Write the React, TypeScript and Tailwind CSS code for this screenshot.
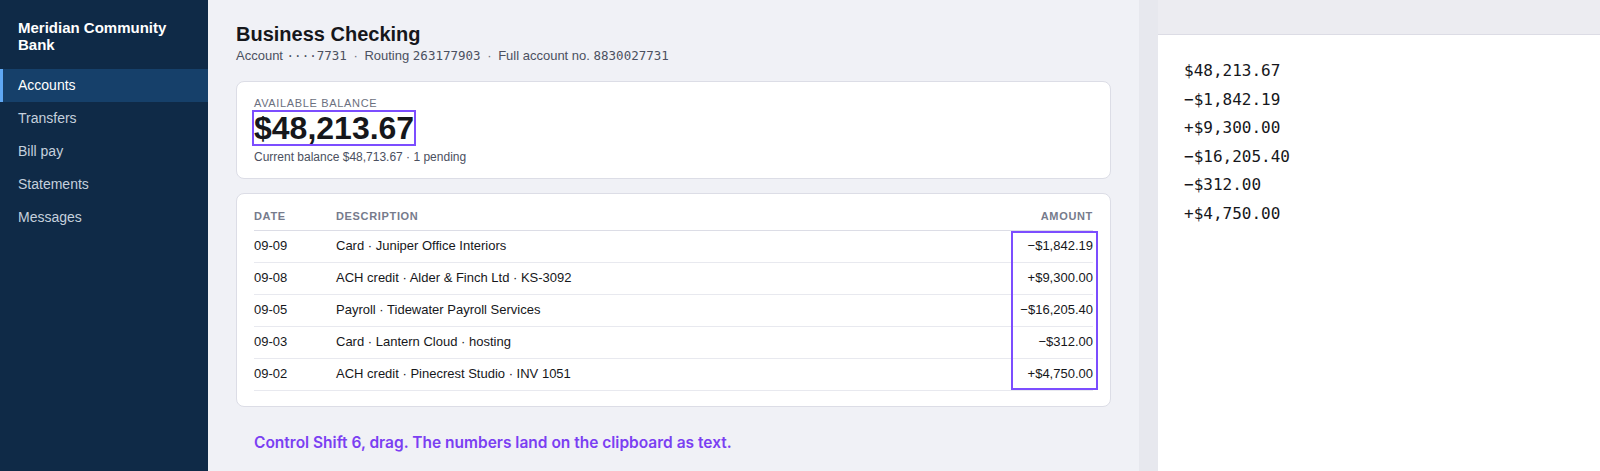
import React from "react";

const navItems = ["Accounts", "Transfers", "Bill pay", "Statements", "Messages"];

const transactions = [
  { date: "09-09", desc: "Card · Juniper Office Interiors", amount: "−$1,842.19" },
  { date: "09-08", desc: "ACH credit · Alder & Finch Ltd · KS-3092", amount: "+$9,300.00" },
  { date: "09-05", desc: "Payroll · Tidewater Payroll Services", amount: "−$16,205.40" },
  { date: "09-03", desc: "Card · Lantern Cloud · hosting", amount: "−$312.00" },
  { date: "09-02", desc: "ACH credit · Pinecrest Studio · INV 1051", amount: "+$4,750.00" },
];

const clipboard = [
  "$48,213.67",
  "−$1,842.19",
  "+$9,300.00",
  "−$16,205.40",
  "−$312.00",
  "+$4,750.00",
];

function Sidebar() {
  return (
    <aside className="w-[208px] shrink-0 bg-[#0f2a47] text-white">
      {/* Bank name */}
      <div className="px-[18px] pt-[19px] pb-[16px] text-[15px] font-bold leading-[17px]">
        Meridian Community
        <br />
        Bank
      </div>

      <nav>
        {navItems.map((item, i) => {
          const active = i === 0;
          return (
            <div
              key={item}
              className={
                active
                  ? "flex h-[33px] items-center border-l-[3px] border-[#5fa8f5] bg-[#16406a] pl-[15px] text-[14px] text-white"
                  : "flex h-[33px] items-center pl-[18px] text-[14px] text-[#c5d0dd]"
              }
            >
              {item}
            </div>
          );
        })}
      </nav>
    </aside>
  );
}

function Sep() {
  return <span className="mx-[3px] text-[#6b7080]">·</span>;
}

function Mono({ children }: { children: React.ReactNode }) {
  return (
    <span className="font-['DejaVu_Sans_Mono','Liberation_Mono',monospace] text-[12.5px]">
      {children}
    </span>
  );
}

function AccountPage() {
  return (
    <main className="w-[931px] shrink-0 bg-[#f0f1f6] px-7 pt-[21px]">
      {/* Header */}
      <h1 className="text-[20px] font-bold leading-[26px] text-[#16171b]">Business Checking</h1>
      <div className="text-[13px] leading-[18px] text-[#4b5060]">
        Account <Mono>····7731</Mono> <Sep /> Routing <Mono>263177903</Mono> <Sep /> Full account no.{" "}
        <Mono>8830027731</Mono>
      </div>

      {/* Balance card */}
      <section className="mt-[16px] rounded-lg border border-[#dcdde6] bg-white px-[17px] pt-[14px] pb-[13px]">
        <div className="text-[11px] leading-[14px] tracking-[0.06em] text-[#6b7080]">AVAILABLE BALANCE</div>
        <div className="mt-[2px]">
          <span className="inline-block text-[32px] font-bold leading-[32px] text-[#16171b] outline-2 outline-[#7c4dff]">
            $48,213.67
          </span>
        </div>
        <div className="mt-[3px] text-[12px] leading-[16px] text-[#4b5060]">
          Current balance $48,713.67 · 1 pending
        </div>
      </section>

      {/* Transactions */}
      <section className="mt-[14px] rounded-lg border border-[#dcdde6] bg-white px-[17px] pt-2 pb-[15px]">
        <div className="relative">
          <table className="w-full border-collapse text-[13px] text-[#16171b]">
            <thead>
              <tr className="h-[28px] border-b border-[#dcdde6] text-left text-[11px] font-bold tracking-[0.06em] text-[#767b8c]">
                <th className="w-[82px] font-bold">DATE</th>
                <th className="font-bold">DESCRIPTION</th>
                <th className="text-right font-bold">AMOUNT</th>
              </tr>
            </thead>
            <tbody>
              {transactions.map((t) => (
                <tr key={t.date} className="h-[32px] border-b border-[#e8e9ef]">
                  <td>{t.date}</td>
                  <td>{t.desc}</td>
                  <td className="text-right">{t.amount}</td>
                </tr>
              ))}
            </tbody>
          </table>
          {/* selection rectangle over the amount column */}
          <div className="pointer-events-none absolute top-[29px] right-[-5px] bottom-[1px] w-[87px] border-2 border-[#7c4dff]" />
        </div>
      </section>

      <p className="mt-[26px] pl-[18px] font-['Inter',sans-serif] text-[15.5px] font-semibold leading-[20px] text-[#7b3ff2]">
        Control Shift 6, drag. The numbers land on the clipboard as text.
      </p>
    </main>
  );
}

function ClipboardPanel() {
  return (
    <div className="flex-1 bg-white">
      <div className="h-[35px] border-b border-[#dcdce5] bg-[#ececf1]" />
      <div className="pl-[26px] pt-[22px] font-['DejaVu_Sans_Mono','Liberation_Mono',monospace] text-[16px] leading-[28.5px] text-[#16171b]">
        {clipboard.map((line) => (
          <div key={line}>{line}</div>
        ))}
      </div>
    </div>
  );
}

export default function App() {
  return (
    <div className="flex h-[471px] w-[1600px] overflow-hidden font-['Liberation_Sans',Arial,sans-serif]">
      <Sidebar />
      <AccountPage />
      <div className="w-[19px] shrink-0 bg-[#e7e8ee]" />
      <ClipboardPanel />
    </div>
  );
}
